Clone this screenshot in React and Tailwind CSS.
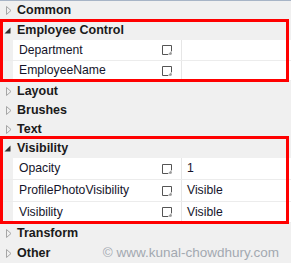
import React from 'react';

const font = { fontFamily: '"Segoe UI", "Liberation Sans", Arial, sans-serif' };

function Collapsed() {
  return (
    <svg width="6" height="9" viewBox="0 0 6 9" className="shrink-0">
      <path d="M0.5 0.5 L5 4.5 L0.5 8.5 Z" fill="none" stroke="#a6a6a6" strokeWidth="1" />
    </svg>
  );
}

function Expanded() {
  return (
    <svg width="7" height="7" viewBox="0 0 7 7" className="shrink-0">
      <path d="M6.5 0.5 L6.5 6.5 L0.5 6.5 Z" fill="#333" />
    </svg>
  );
}

function EditIcon() {
  return (
    <svg width="10" height="10" viewBox="0 0 10 10" className="shrink-0">
      <path d="M0.5 0.5 H9.5 V6 M0.5 0.5 V9.5 H6" fill="none" stroke="#555" strokeWidth="1" />
      <path d="M6 9.5 L9.5 6 L9.5 9.5 Z" fill="#555" />
      <path d="M7 9.5 L9.5 7" stroke="#fff" strokeWidth="0.8" />
    </svg>
  );
}

function Category({ name, open, h = 'h-[19px]', children }) {
  return (
    <div className={`flex items-center ${h} ${open ? 'pl-[4px] gap-[6px]' : 'pl-[6px] gap-[5px]'}`}>
      {open ? <Expanded /> : <Collapsed />}
      <span className="text-[12.5px] font-bold text-[#1a1a1a]">{name}</span>
      {children}
    </div>
  );
}

function Prop({ name, value, h = 'h-[21px]' }) {
  return (
    <div className={`flex ${h} border-b border-[#ececec]`}>
      <div className="w-[13px] bg-[#f0f0f0]" />
      <div className="flex items-center w-[168px] bg-white pl-[6px] pr-[9px]">
        <span className="text-[12.2px] text-[#14142a] flex-1">{name}</span>
        <EditIcon />
      </div>
      <div className="w-px bg-[#e6e6e6]" />
      <div className="flex items-center flex-1 bg-white pl-[5px] text-[12.2px] text-[#14142a]">{value}</div>
    </div>
  );
}

function Group({ top, bottom, children }) {
  return (
    <div className="relative">
      {children}
      <div className={`absolute left-0 right-[2px] ${top} ${bottom} border-[3px] border-[#ff0000] pointer-events-none`} />
    </div>
  );
}

export default function App() {
  return (
    <div className="w-[291px] h-[263px] bg-[#f0f0f0] border-t border-[#a7b4c6] overflow-hidden" style={font}>
      <Category name="Common" />
      <Group top="-top-[1px]" bottom="-bottom-[1px]">
        <Category name="Employee Control" open h="h-[20px]" />
        <Prop name="Department" value="" />
        <Prop name="EmployeeName" value="" h="h-[20px]" />
      </Group>
      <Category name="Layout" h="h-[20px]" />
      <Category name="Brushes" />
      <Category name="Text" />
      <Group top="-top-[3px]" bottom="-bottom-[1px]">
        <Category name="Visibility" open />
        <Prop name="Opacity" value="1" h="h-[22px]" />
        <Prop name="ProfilePhotoVisibility" value="Visible" h="h-[22px]" />
        <Prop name="Visibility" value="Visible" />
      </Group>
      <Category name="Transform" h="h-[20px]" />
      <Category name="Other" h="h-[20px]">
        <span className="ml-auto mr-[12px] text-[13.5px] text-[#a3a9b1]">© www.kunal-chowdhury.com</span>
      </Category>
    </div>
  );
}
